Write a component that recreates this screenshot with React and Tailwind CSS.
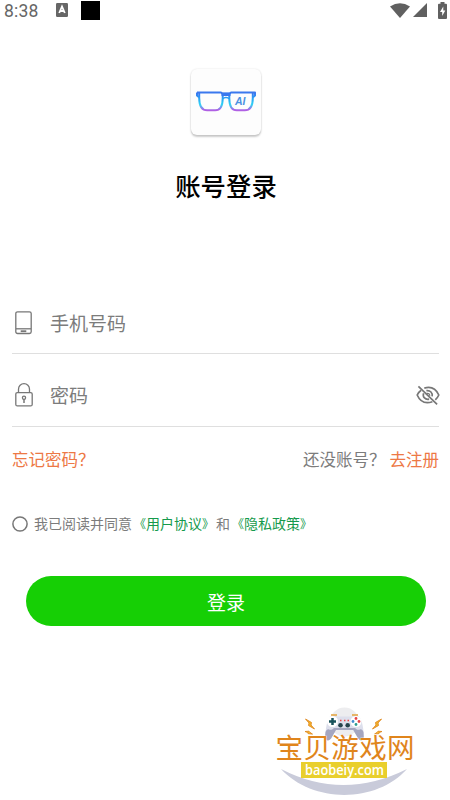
function StatusBar() {
  return (
    <header className="h-5 flex items-center shrink-0 text-[#666]">
      <span className="ml-1 mt-px w-[50px] text-[17.5px] leading-5 tracking-[0.2px] font-[Roboto,sans-serif]">8:38</span>
      <svg className="ml-0.5" width="12" height="14" viewBox="0 0 12 14">
        <rect width="12" height="14" rx="1.2" fill="#666" />
        <path d="M3.2 10 6 3.5 8.8 10M4.2 8h3.6" fill="none" stroke="#fff" strokeWidth="1.8" />
      </svg>
      <span className="ml-[13px] w-[19px] h-[19px] bg-black" />
      <div className="ml-auto mr-[3px] flex items-center">
        <svg width="20" height="15" viewBox="0 0 20 15">
          <path d="M0 3.5Q10-3 20 3.5L10 15Z" fill="#606060" />
        </svg>
        <svg className="ml-[3px]" width="14" height="14" viewBox="0 0 14 14">
          <path d="M14 0v14H0Z" fill="#606060" />
        </svg>
        <svg className="ml-[11px]" width="9" height="17" viewBox="0 0 9 17">
          <path d="M2.5 0h4v1.8H8q1 0 1 1V16q0 1-1 1H1q-1 0-1-1V2.8q0-1 1-1h1.500Z" fill="#606060" />
          <path d="M5.3 4.5 2 10h2.2v4L7.3 8.5H5.3Z" fill="#fff" />
        </svg>
      </div>
    </header>
  );
}

function GlassesLogo() {
  return (
    <svg width="60" height="22" viewBox="0 0 60 22">
      <defs>
        <linearGradient id="frame" x1="0" y1="0" x2="0" y2="21" gradientUnits="userSpaceOnUse">
          <stop offset="0.12" stopColor="#3a78ee" />
          <stop offset="0.35" stopColor="#29a0f5" />
          <stop offset="0.65" stopColor="#30d5f5" />
          <stop offset="0.9" stopColor="#b060e4" />
        </linearGradient>
      </defs>
      <g fill="none" stroke="url(#frame)" strokeWidth="2" strokeLinejoin="round">
        <path d="M1 1.5H25l1.5 1.2h7L35 1.5h24v3l-2 1.8M1 1.5v3l2 1.8" />
        <path d="M3.2 2v5c0 8 2.5 12.3 8 12.3h8c5 0 7.5-4.5 7.5-12V3" />
        <path d="M56.8 2v5c0 8-2.5 12.3-8 12.3h-8c-5 0-7.5-4.5-7.5-12V3" />
        <path d="M27 8c.8-2 5.2-2 6 0" strokeWidth="1.4" />
      </g>
      <path d="M25.5 1.5h9V5h-9Z" fill="#3a78ee" />
      <text x="39" y="13.8" fontSize="10.5" fontWeight="700" fontStyle="italic" fontFamily="Liberation Sans, sans-serif" fill="#4a90e2">AI</text>
    </svg>
  );
}

function PhoneIcon() {
  return (
    <svg width="17" height="24" viewBox="0 0 17 24" fill="none" stroke="#777" strokeWidth="1.3">
      <rect x="0.8" y="0.8" width="15.4" height="21.7" rx="1.8" />
      <path d="M1 17.8h15" />
      <path d="M5.7 20.2h5.6" strokeWidth="1.8" />
    </svg>
  );
}

function LockIcon() {
  return (
    <svg width="18" height="24" viewBox="0 0 18 24" fill="none" stroke="#777" strokeWidth="1.3">
      <rect x="0.8" y="9.6" width="16.4" height="13.3" rx="1.5" />
      <path d="M3.5 9.5V6.2a5.5 5.5 0 0 1 11 0v3.3" />
      <circle cx="9" cy="14.8" r="1.6" />
      <path d="M9 16v4" strokeWidth="1.5" />
    </svg>
  );
}

function EyeOffIcon() {
  return (
    <svg width="24" height="21" viewBox="0 0 24 21" fill="none" stroke="#777" strokeWidth="1.7">
      <path d="M8.3 3.1C16 .8 20.5 5 22.8 10c-.8 1.8-2 3.5-3.5 4.8M5.1 5.2C3.4 6.5 2 8.1 1.2 10c3.2 7.4 9.2 8.8 15.2 6.8" />
      <path d="M10.4 5.7c3.7-.7 6.6 2.3 5.7 5.7M7.6 8.2c-1.3 3.8 1.8 6.8 5.5 6" />
      <path d="M10.5 8.4c2-.5 3.4.8 3.2 2.5" strokeWidth="1.2" />
      <path d="m2.4 1.4 18.7 17.9" />
    </svg>
  );
}

function Agreement({ name }) {
  return (
    <a className="text-[#159a4c]">
      <span className="inline-block w-[14px] pl-0.5 text-[12px]">《</span>
      {name}
      <span className="inline-block w-[14px] text-[12px]">》</span>
    </a>
  );
}

function Watermark() {
  return (
    <svg className="absolute left-[270px] top-[700px]" width="150" height="100" viewBox="0 0 150 100">
      <circle cx="74.5" cy="22" r="14.5" fill="#ededef" />
      <path d="M11 69q62 32 126 0c-30 34-94 35-126 0Z" fill="#c9cbda" />
      {/* gamepad */}
      <path d="M60 16.5q4-1.5 7.5 0h14q4-1.5 7.5 0c3 3 5 13 4.5 19-.3 5-4 5-6 1.5L83 30H66l-4.5 7c-2 3.5-6 3.5-6-1.5 0-6 1.5-16 4.5-19Z" fill="#dddfec" />
      <path d="M55.5 32c1-2 2-3 3.5-2.5 1.5.6 3 .5 5-1.5h21c2 2 3.5 2.1 5 1.5 1.5-.5 2.5.5 3.5 2.5l.3 5c-1 5-4.5 4-6.5 0l-4-7H66l-4 7c-2 4-6 5-7 0Z" fill="#a4a6c0" />
      <path d="M61 15h6M82 15h6" stroke="#e4a33c" strokeWidth="1.7" />
      <circle cx="62.5" cy="21.5" r="5.5" fill="#fff" />
      <path d="M62.5 18v7M59 21.5h7" stroke="#18525b" strokeWidth="2.5" />
      <circle cx="86" cy="21.5" r="5.5" fill="#fff" />
      <circle cx="86" cy="18.5" r="1.4" fill="#e74449" />
      <circle cx="86" cy="24.5" r="1.4" fill="#2c9c91" />
      <circle cx="83" cy="21.5" r="1.4" fill="#438dd0" />
      <circle cx="89" cy="21.5" r="1.4" fill="#e74449" />
      <circle cx="70.5" cy="25.3" r="2.3" fill="#25434d" />
      <circle cx="77.7" cy="25.3" r="2.3" fill="#25434d" />
      <path d="M70 20.5h1.5M74 20.5h1.5M77.5 20.5h1.5" stroke="#e44" strokeWidth="1.3" />
      {/* sparks */}
      <g fill="#f4b428" stroke="#df8a24" strokeWidth="0.9">
        <path d="m35.5 19 6 3.5-.5 2.5 3.5 4-6-3.5.5-2.5Z" />
        <path d="m35 31.5 4-.3 1 1.2 2.500 1.700-4.500-.5-.5-1.200Z" />
        <path d="m111.500 19-6 3.500.5 2.500-3.500 4 6-3.500-.5-2.500Z" />
        <path d="m112 31.500-4-.3-1 1.200-2.500 1.700 4.500-.5.500-1.200Z" />
      </g>
      <text x="5.5" y="58" fontSize="27.5" fontWeight="400" textLength="139" fontFamily="Noto Sans CJK SC, sans-serif" fill="#e0851c" stroke="#fff" strokeWidth="0.6" paintOrder="stroke">宝贝游戏网</text>
      <rect x="31" y="62" width="86" height="16" fill="#e9cf2d" />
      <text x="35" y="74.5" fontSize="13.5" fontWeight="600" textLength="79" lengthAdjust="spacingAndGlyphs" fontFamily="Open Sans, sans-serif" fill="#fff">baobeiy.com</text>
    </svg>
  );
}

export default function App() {
  return (
    <div className="relative w-[450px] h-[800px] overflow-hidden flex flex-col bg-white text-[#7c7c7c] font-['Noto_Sans_CJK_SC',sans-serif]">
      <StatusBar />

      <div className="mt-[49px] flex flex-col items-center">
        <div className="w-[70px] h-[66px] ml-0.5 rounded-md bg-[#fdfdfd] shadow-[0_2px_2px_0_rgba(0,0,0,0.2),0_0_2px_0_rgba(0,0,0,0.12)] flex items-center justify-center">
          <GlassesLogo />
        </div>
        <h1 className="mt-[31px] ml-0.5 text-[25.4px] leading-[38px] font-medium text-black">账号登录</h1>
      </div>

      <form className="mt-[88px] pl-3 pr-[11px]">
        <div className="h-[62px] flex items-center border-b border-[#dfdfdf]">
          <div className="w-[38px] pl-[3px]"><PhoneIcon /></div>
          <span className="text-[19px] leading-7">手机号码</span>
        </div>
        <div className="h-[73px] pt-[10px] flex items-center border-b border-[#dfdfdf]">
          <div className="w-[38px] pl-[3px]"><LockIcon /></div>
          <span className="text-[19px] leading-7">密码</span>
          <div className="ml-auto -mr-px pt-px"><EyeOffIcon /></div>
        </div>

        <div className="mt-5 flex text-[16.5px] leading-[25px]">
          <a className="text-[#ed7845]">忘记密码？</a>
          <span className="ml-auto">还没账号？</span>
          <a className="ml-1 text-[#ed7845]">去注册</a>
        </div>

        <div className="mt-[41px] h-[21px] flex items-center text-[14px] leading-[21px]">
          <svg className="mr-1.5" width="16" height="16" viewBox="0 0 16 16">
            <circle cx="8" cy="8" r="7.1" fill="none" stroke="#777" strokeWidth="1.5" />
          </svg>
          <p className="whitespace-nowrap">
            我已阅读并同意<Agreement name="用户协议" />和<Agreement name="隐私政策" />
          </p>
        </div>
      </form>

      <button className="mt-[42px] ml-[26px] w-[400px] h-[50px] pt-px rounded-full bg-[#16cf05] text-white text-[19px] leading-7">登录</button>

      <Watermark />
    </div>
  );
}
